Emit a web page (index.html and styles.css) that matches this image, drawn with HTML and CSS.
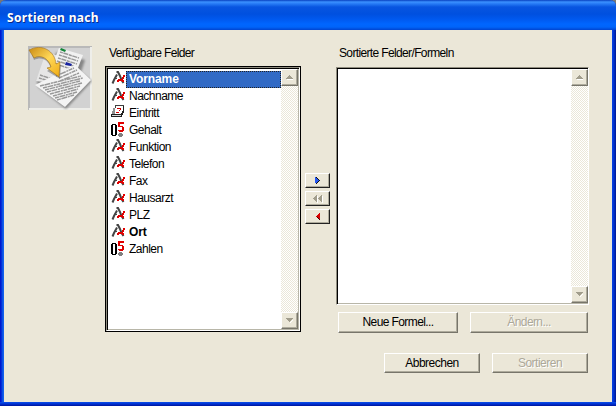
FILE: index.html
```html
<!DOCTYPE html>
<html lang="de">
<head>
<meta charset="utf-8">
<title>Sortieren nach</title>
<link rel="stylesheet" href="styles.css">
</head>
<body>
<svg width="0" height="0" class="defs">
  <symbol id="text" viewBox="0 0 14 13">
    <path fill="none" stroke="#444" stroke-width="2" shape-rendering="auto" d="M1.500 12.500L3 9l3-5.500M5.500 1h1.500l2 4 1.500 4 2 3"/>
    <path fill="#444" d="M3 7h3v1h-3z"/>
    <path fill="#e00000" d="M12 4h2v2h-1v2h-1v1h1v2h-2v-1h-3v1h-2v-2h1v-1h4v-2h1z"/>
  </symbol>
  <symbol id="date" viewBox="0 0 14 13">
    <path fill="#fff" stroke="#404040" d="M4.500 .5h8v6l-2 3h-8z"/>
    <path fill="#909090" d="M2 3h2v6h-2zM1 6h1v3h-1z"/>
    <path fill="#202020" d="M0 9h10v-1h1v-2h1v-5h1v7h-1v2h-1v2h-11z"/>
    <path fill="#d8d8d8" d="M1 10h9v1h-9z"/>
    <path fill="none" stroke="#d00000" d="M6 3.500h3.500v1l-2 2M5 7.500h3"/>
  </symbol>
  <symbol id="num" viewBox="0 0 14 15">
    <path fill="#000" fill-rule="evenodd" d="M1 2h4v1h1v10h-1v1h-4v-1h-1v-10h1zM2 3v10h2v-10z"/>
    <path fill="#e00000" d="M7 0h6v2h-4v2h3v1h1v4h-1v1h-4v-1h-1v-1h4v-3h-4z"/>
    <path fill="#808080" d="M8 11h3v1h1v2h-1v1h-3v-1h-1v-2h1z"/>
  </symbol>
  <symbol id="up" viewBox="0 0 7 5"><path fill="#fff" d="M1 4h6v1h-6z"/><path fill="#a19d8c" d="M3 0h1v1h1v1h1v1h1v1h-7v-1h1v-1h1v-1h1z"/></symbol>
  <symbol id="down" viewBox="0 0 7 5"><path fill="#fff" d="M4 4h1v-1h1v-1h1v1h-1v1h-1v1h-1z"/><path fill="#a19d8c" d="M0 0h7v1h-1v1h-1v1h-1v1h-1v-1h-1v-1h-1v-1h-1z"/></symbol>
</svg>
<div class="window">
  <header class="titlebar">Sortieren nach</header>
  <main class="content">
    <svg class="picture" width="64" height="64" viewBox="0 0 64 64">
      <defs>
        <linearGradient id="gold" x1="0" y1="0" x2="1" y2="1"><stop offset="0" stop-color="#c98a13"/><stop offset=".5" stop-color="#ffd858"/><stop offset="1" stop-color="#efaa12"/></linearGradient>
        <filter id="soft"><feGaussianBlur stdDeviation="1.3"/></filter>
      </defs>
      <path fill="#d2d2d2" d="M0 0h64v64h-64z"/>
      <path fill="none" stroke="#b9b9b9" stroke-width="2" d="M1 64V1h63"/>
      <path fill="none" stroke="#eeeeea" stroke-width="2" d="M1 63h62V1"/>
      <path fill="#666" opacity=".7" filter="url(#soft)" d="M9 35l20-29 28 8-4 12 11 9-26 28-28-22z"/>
      <path fill="#e6e6e6" d="M18 6l22 7-10 25-22-3z"/>
      <path fill="#f1f1f1" d="M31 2l24 7-9 23-24-7z"/>
      <g stroke="#999" stroke-width="1.500" stroke-dasharray="3 .6 5 .7">
        <path d="M32 6l19 6M31 9l19 6M30 12l19 6M29 15l19 6M28 18l18 6M12 29l12 4M11 32l13 4"/>
      </g>
      <path fill="#118535" d="M33 2l5 2-1 2-5-2z"/><path fill="#dc2020" d="M20 7l4 1-1 2-4-1z"/>
      <path fill="#f4f4f4" d="M7 39l40-20 16 15-26 27z"/>
      <path fill="#1722a0" d="M38 16l6 2-1 2-6-1z"/>
      <g stroke="#999" stroke-width="1.500" stroke-dasharray="4 .6 6 .7 2 .5">
        <path d="M28 30l18-8M31 32l18-8M32 35l19-8M12 40l41-10M15 42l40-10M17 44l35-9M19 46l35-9M22 48l30-8M25 50l25-7M27 52l22-6M29 54l17-5"/>
      </g>
      <path fill="#555" opacity=".45" d="M4 9c12-7 22 1 24 11l5-1-1 14-13-8 4-3c-3-8-9-12-17-8z"/>
      <path fill="url(#gold)" stroke="#9f6e16" stroke-width=".6" d="M1 4c13-7 26 1 27 14l4-2-1 15-12-9 4-1c-2-8-10-13-17-9z"/>
    </svg>

    <section class="available">
      <h2>Verfügbare Felder</h2>
      <div class="focus-frame">
        <div class="list">
          <ul>
            <li class="selected bold"><svg><use href="#text"/></svg><span>Vorname</span></li>
            <li><svg><use href="#text"/></svg><span>Nachname</span></li>
            <li><svg><use href="#date"/></svg><span>Eintritt</span></li>
            <li><svg class="num"><use href="#num"/></svg><span>Gehalt</span></li>
            <li><svg><use href="#text"/></svg><span>Funktion</span></li>
            <li><svg><use href="#text"/></svg><span>Telefon</span></li>
            <li><svg><use href="#text"/></svg><span>Fax</span></li>
            <li><svg><use href="#text"/></svg><span>Hausarzt</span></li>
            <li><svg><use href="#text"/></svg><span>PLZ</span></li>
            <li class="bold"><svg><use href="#text"/></svg><span>Ort</span></li>
            <li><svg class="num"><use href="#num"/></svg><span>Zahlen</span></li>
          </ul>
          <div class="scroll"><i><svg><use href="#up"/></svg></i><i><svg><use href="#down"/></svg></i></div>
        </div>
      </div>
    </section>

    <div class="movers">
      <button class="black-edge"><svg width="5" height="7"><path fill="#111" d="M1 0h1v1h1v1h1v1h1v1h-1v1h-1v1h-1v1h-1z"/><path fill="#2456f0" d="M0 0h1v1h1v1h1v1h1v1h-1v1h-1v1h-2z"/></svg></button>
      <button class="black-edge"><svg width="10" height="8"><path fill="#fff" d="M4 1h1v7h-1zM9 1h1v7h-1z"/><path fill="#a19d8c" d="M3 0h1v7h-1v-1h-1v-1h-1v-1h-1v-1h1v-1h1v-1h1zM8 0h1v7h-1v-1h-1v-1h-1v-1h-1v-1h1v-1h1v-1h1z"/></svg></button>
      <button class="black-edge"><svg width="4" height="7"><path fill="#d80000" d="M3 0h1v7h-1v-1h-1v-1h-1v-1h-1v-1h1v-1h1v-1h1z"/><path fill="#400" d="M1 4h1v1h1v1h1v1h-1v-1h-1v-1h-1z"/></svg></button>
    </div>

    <section class="sorted">
      <h2>Sortierte Felder/Formeln</h2>
      <div class="list">
        <ul></ul>
        <div class="scroll"><i><svg><use href="#up"/></svg></i><i><svg><use href="#down"/></svg></i></div>
      </div>
      <div class="actions formula">
        <button>Neue Formel...</button><button disabled>Ändern...</button>
      </div>
      <div class="actions confirm">
        <button>Abbrechen</button><button disabled>Sortieren</button>
      </div>
    </section>
  </main>
</div>
</body>
</html>
```
FILE: styles.css
```css
* { box-sizing: border-box; }
body { margin: 0; background: #777; font: 12px/17px "Liberation Sans", sans-serif; letter-spacing: -.5px; color: #000; overflow: hidden; }
svg { display: block; shape-rendering: crispEdges; }
.defs { position: absolute; }
.window {
  width: 616px; height: 406px; padding: 0 4px 4px;
  border-radius: 6px 6px 0 0;
  background: linear-gradient(#0a50ea, #0030d0 50%, #00149a) bottom / 100% 4px no-repeat,
    linear-gradient(90deg, #0019cf 0 1px, #0848e0 2px, #1668f0 4px, transparent 4px, transparent 612px, #0842e4 612px, #0030cc 614px, #001590 616px);
}
.titlebar {
  height: 30px; margin: 0 -4px; padding: 9px 0 0 7px;
  border-radius: 6px 6px 0 0;
  background: linear-gradient(#0840c0 0, #3b91ff 2px, #2478f4 4px, #0855e0 7px, #0050df 14px, #0058ee 19px, #0066ff 24px, #0064fa 27px, #0044d0 30px);
  color: #fff; font: bold 12px/17px "Noto Sans", sans-serif; letter-spacing: .3px;
  text-shadow: 1px 1px #0a2a88;
}
.content { display: flex; height: 372px; padding-left: 24px; background: #ebe7d8; }
.picture { flex: none; margin: 16px 13px 0 0; shape-rendering: auto; }
h2 { margin: 0; font: inherit; padding-left: 4px; height: 21px; letter-spacing: -.64px; }
.available { width: 196px; padding-top: 15px; }
.focus-frame { height: 266px; border: 1px solid #000; background: #fff; }
.list { display: flex; height: 263px; padding: 1px; border: 1px solid; border-color: #8f8c7e #fff #fff #8f8c7e; background: #fff; box-shadow: inset 1px 1px #000, inset -1px -1px #b8b6a8; }
.focus-frame .list { height: 264px; }
ul { flex: 1; list-style: none; margin: 0; padding: 2px 0 0 2px; }
li { display: flex; height: 17px; line-height: 17px; }
li svg { flex: none; width: 14px; height: 13px; margin: 0 1px 0 1px; }
li svg.num { height: 15px; }
li span { flex: 1; padding-left: 3px; }
.bold { font-weight: bold; letter-spacing: -.1px; }
.selected span { background: #316ac5; color: #fff; outline: 1px dotted #222; outline-offset: -1px; }
.scroll {
  width: 17px; display: flex; flex-direction: column; justify-content: space-between;
  background: repeating-conic-gradient(#fff 0 25%, #ebe7d8 0 50%) 0 0 / 2px 2px;
}
.scroll i { display: grid; place-items: center; height: 17px; background: #ebe7d8; border: 1px solid; border-color: #fff #77756a #77756a #fff; box-shadow: inset -1px -1px #aeab9c; }
.scroll svg { width: 7px; height: 5px; }
.movers { display: flex; flex-direction: column; gap: 3px; padding: 143px 6px 0 4px; }
button {
  display: grid; place-items: center; padding: 0; background: #ebe7d8;
  border: 1px solid; border-color: #fff #77756a #77756a #fff; box-shadow: inset -1px -1px #aeab9c;
  font: inherit; letter-spacing: inherit; color: #000; white-space: nowrap;
}
button:disabled { color: #aca899; text-shadow: 1px 1px #fff; }
.black-edge { width: 25px; height: 15px; border-color: #fff #222 #222 #fff; }
.sorted { width: 253px; padding-top: 15px; }
.sorted h2 { padding-left: 3px; height: 22px; }
.sorted .list { height: 238px; padding-right: 0; }
.actions { display: flex; justify-content: flex-end; gap: 12px; padding-right: 1px; }
.formula { margin-top: 7px; letter-spacing: -.6px; }
.formula button { width: 120px; height: 21px; }
.formula button:last-child { width: 118px; }
.confirm { margin-top: 20px; letter-spacing: -.5px; }
.confirm button { width: 96px; height: 20px; }
```
